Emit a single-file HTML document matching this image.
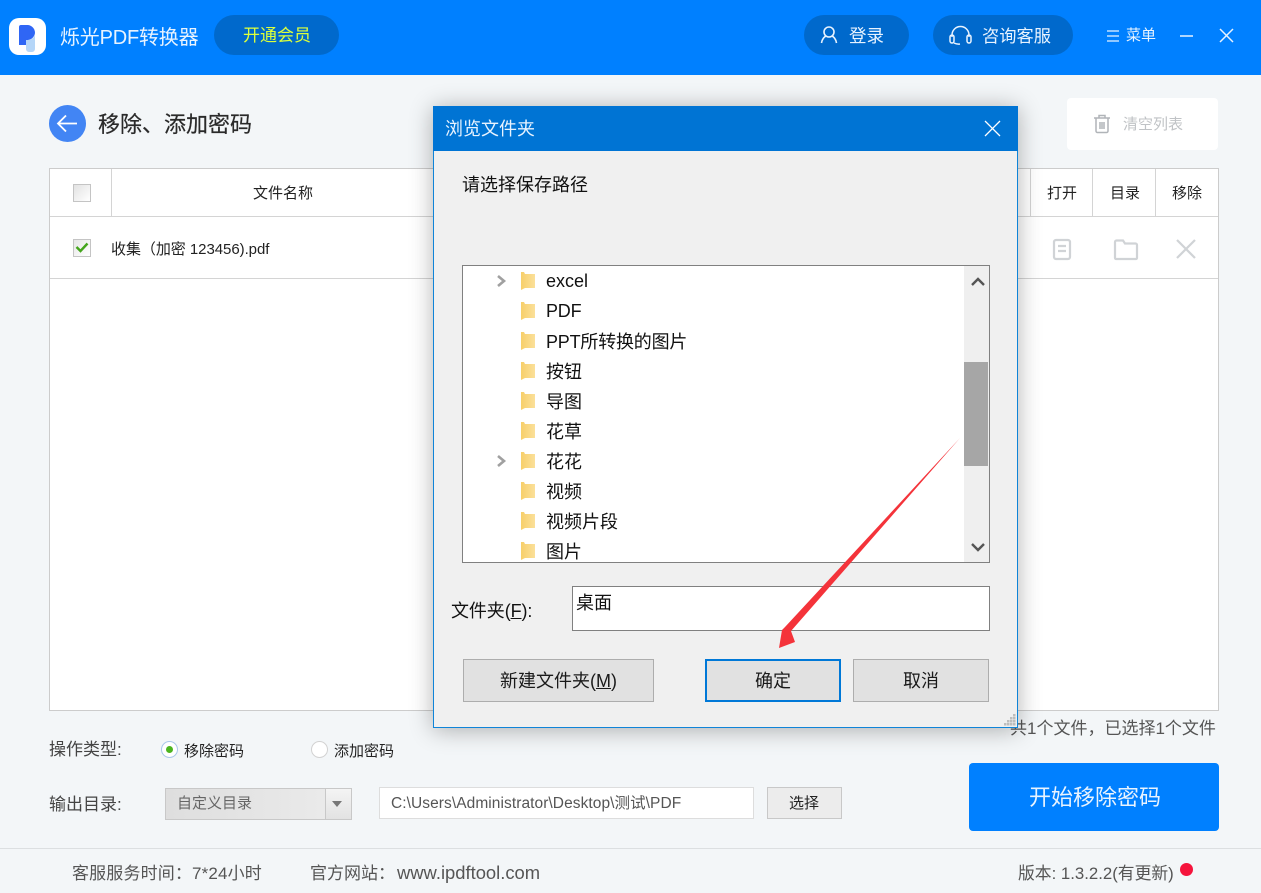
<!DOCTYPE html>
<html lang="zh"><head><meta charset="utf-8"><title>烁光PDF转换器</title>
<style>
html,body{margin:0;padding:0}
body{width:1261px;height:893px;position:relative;overflow:hidden;background:#f3f6f8;font-family:"Liberation Sans","Noto Sans CJK SC",sans-serif;color:#222}
.a{position:absolute;box-sizing:border-box}
.t{position:absolute;white-space:nowrap;line-height:24px;height:24px}
svg{position:absolute;overflow:visible}
.pill{background:#0069cc;border-radius:20px;height:40px;top:15px}
.line{position:absolute;background:#d4d4d4}
.btn{position:absolute;box-sizing:border-box;background:#e1e1e1;border:1px solid #adadad;top:659px;height:43px;text-align:center;line-height:42px;font-size:18px;color:#1a1a1a}
.row{position:absolute;left:546px;font-size:18px;line-height:24px;height:24px;white-space:nowrap;color:#111}
</style></head><body>

<!-- header -->
<div class="a" style="left:0;top:0;width:1261px;height:75px;background:#0080ff"></div>
<div class="a" style="left:9px;top:18px;width:37px;height:37px;background:#fff;border-radius:10px"></div>
<svg style="left:0;top:0" width="60" height="60"><path d="M21 25h7a8 8 0 0 1 7 8a8 8 0 0 1-7 7h-2v5h-7V27a2 2 0 0 1 2-2z" fill="#2f66f5"/><path d="M26 40h2a8 8 0 0 0 7-5v14a3 3 0 0 1-3 3h-3a3 3 0 0 1-3-3z" fill="#b5d6f8"/></svg>
<div class="t" style="left:60px;top:26px;font-size:20px;letter-spacing:-.2px;color:#e8f3ff">烁光PDF转换器</div>
<div class="a pill" style="left:214px;width:125px"></div>
<div class="t" style="left:243px;top:24px;font-size:17px;color:#dcff3c">开通会员</div>
<div class="a pill" style="left:804px;width:105px"></div>
<svg style="left:820px;top:25px" width="20" height="20" fill="none" stroke="#e8f3ff" stroke-width="1.6"><circle cx="9" cy="7" r="5"/><path d="M1.5 18c.5-4 3-6.5 4.5-6.8M16.5 18c-.5-4-3-6.5-4.500-6.800"/></svg>
<div class="t" style="left:849px;top:24px;font-size:17.5px;color:#e8f3ff">登录</div>
<div class="a pill" style="left:933px;width:140px"></div>
<svg style="left:949px;top:25px" width="24" height="20" fill="none" stroke="#e8f3ff" stroke-width="1.5"><path d="M3 12V10a8.5 8.5 0 0 1 17 0v2"/><rect x="1" y="10" width="4" height="8" rx="2"/><rect x="18" y="10" width="4" height="8" rx="2"/><path d="M5 18q3 1.5 6 1"/></svg>
<div class="t" style="left:982px;top:24px;font-size:17.25px;color:#e8f3ff">咨询客服</div>
<svg style="left:1106px;top:29px" width="14" height="14" stroke="#e8f3ff" stroke-width="1.3"><path d="M1 2h12M1 7h12M1 12h12"/></svg>
<div class="t" style="left:1126px;top:24px;font-size:15px;color:#e8f3ff">菜单</div>
<svg style="left:1179px;top:28px" width="56" height="16" stroke="#e8f3ff" stroke-width="1.5" fill="none"><path d="M1 8h13M41 1l13 13M54 1L41 14"/></svg>

<!-- title row -->
<div class="a" style="left:49px;top:105px;width:37px;height:37px;border-radius:50%;background:#4285f4"></div>
<svg style="left:49px;top:105px" width="37" height="37" fill="none" stroke="#fff" stroke-width="1.8"><path d="M9 18.5h19M17 10.5l-8 8 8 8"/></svg>
<div class="t" style="left:98px;top:113px;font-size:22px;color:#2a2a2a;-webkit-text-stroke:.2px #2a2a2a">移除、添加密码</div>
<div class="a" style="left:1067px;top:98px;width:151px;height:52px;background:#fff;border-radius:4px"></div>
<svg style="left:1093px;top:114px" width="20" height="20" fill="none" stroke="#b0b4b8" stroke-width="1.5"><path d="M1 4h16M6 4V1.500h6V4M3 4v13a1.500 1.500 0 0 0 1.500 1.500h9A1.500 1.500 0 0 0 15 17V4M7 8v7M9 8v7M11 8v7"/></svg>
<div class="t" style="left:1123px;top:113px;font-size:15px;color:#c0c3c6">清空列表</div>

<!-- table -->
<div class="a" style="left:49px;top:168px;width:1170px;height:543px;background:#fff;border:1px solid #ccc"></div>
<div class="line" style="left:50px;top:216px;width:1168px;height:1px"></div>
<div class="line" style="left:50px;top:278px;width:1168px;height:1px"></div>
<div class="line" style="left:111px;top:169px;width:1px;height:47px"></div>
<div class="line" style="left:1030px;top:169px;width:1px;height:47px"></div>
<div class="line" style="left:1092px;top:169px;width:1px;height:47px"></div>
<div class="line" style="left:1155px;top:169px;width:1px;height:47px"></div>
<div class="a" style="left:73px;top:184px;width:18px;height:18px;border:1px solid #c4c4c4;background:linear-gradient(135deg,#e2e2e2,#fff)"></div>
<div class="t" style="left:253px;top:182px;font-size:15px">文件名称</div>
<div class="t" style="left:1047px;top:182px;font-size:15px">打开</div>
<div class="t" style="left:1110px;top:182px;font-size:15px">目录</div>
<div class="t" style="left:1172px;top:182px;font-size:15px">移除</div>
<div class="a" style="left:73px;top:239px;width:18px;height:18px;border:1px solid #c4c4c4;background:linear-gradient(135deg,#e6e6e6,#fff)"></div>
<svg style="left:73px;top:239px" width="18" height="18" fill="none" stroke="#44a51c" stroke-width="2.4"><path d="M3.5 8l4 4 7-7.500"/></svg>
<div class="t" style="left:111px;top:238px;font-size:15px;letter-spacing:-.05px">收集（加密 123456).pdf</div>
<svg style="left:1052px;top:238px" width="146" height="22" fill="none" stroke="#d0d3d6" stroke-width="2.2"><rect x="2" y="2" width="16" height="19" rx="2"/><path d="M6 8h8M6 13h8"/><path d="M63 20V4a1.5 1.5 0 0 1 1.5-1.5H71l2 3h10.5A1.5 1.5 0 0 1 85 7v13a1 1 0 0 1-1 1H64a1 1 0 0 1-1-1z"/><path d="M125 2l18 18M143 2l-18 18"/></svg>

<!-- bottom options -->
<div class="t" style="left:49px;top:738px;font-size:17px;color:#444">操作类型:</div>
<div class="a" style="left:161px;top:741px;width:17px;height:17px;border-radius:50%;background:#fff;border:1px solid #aac8ea"></div>
<div class="a" style="left:166px;top:746px;width:7px;height:7px;border-radius:50%;background:#4cb51f"></div>
<div class="t" style="left:184px;top:740px;font-size:15px">移除密码</div>
<div class="a" style="left:311px;top:741px;width:17px;height:17px;border-radius:50%;background:#fff;border:1px solid #d2d2d2"></div>
<div class="t" style="left:334px;top:740px;font-size:15px">添加密码</div>
<div class="t" style="left:49px;top:793px;font-size:17px;color:#444">输出目录:</div>
<div class="a" style="left:165px;top:788px;width:187px;height:32px;border:1px solid #c8c8c8;background:linear-gradient(90deg,#dedede,#ececec)"></div>
<div class="a" style="left:325px;top:788px;width:27px;height:32px;border:1px solid #c8c8c8;background:linear-gradient(#f4f4f4,#e2e2e2)"></div>
<svg style="left:332px;top:801px" width="11" height="7"><path d="M0 0h10L5 6z" fill="#777"/></svg>
<div class="t" style="left:177px;top:792px;font-size:15px;color:#666">自定义目录</div>
<div class="a" style="left:379px;top:787px;width:375px;height:32px;background:#fff;border:1px solid #ddd"></div>
<div class="t" style="left:391px;top:792px;font-size:15.5px;color:#555;letter-spacing:.07px">C:\Users\Administrator\Desktop\测试\PDF</div>
<div class="a" style="left:767px;top:787px;width:75px;height:32px;background:#ececec;border:1px solid #c8c8c8"></div>
<div class="t" style="left:789px;top:792px;font-size:15px;color:#222">选择</div>
<div class="t" style="left:1010px;top:717px;font-size:17px;color:#555">共1个文件，已选择1个文件</div>
<div class="a" style="left:969px;top:763px;width:250px;height:68px;background:#0080ff;border-radius:4px"></div>
<div class="t" style="left:1029px;top:786px;font-size:22px;color:#e8f3ff">开始移除密码</div>

<!-- footer -->
<div class="line" style="left:0;top:848px;width:1261px;height:1px;background:#dcdfe1"></div>
<div class="t" style="left:72px;top:862px;font-size:17px;letter-spacing:.15px;color:#555">客服服务时间：7*24小时</div>
<div class="t" style="left:310px;top:862px;font-size:17px;color:#555">官方网站：</div>
<div class="t" style="left:397px;top:861px;font-size:18.4px;color:#555">www.ipdftool.com</div>
<div class="t" style="left:1018px;top:862px;font-size:16.8px;color:#555">版本: 1.3.2.2(有更新)</div>
<div class="a" style="left:1180px;top:863px;width:13px;height:13px;border-radius:50%;background:#f5143c"></div>

<!-- dialog -->
<div class="a" style="left:433px;top:106px;width:585px;height:622px;background:#f0f0f0;border:1px solid #0f84d8;box-shadow:0 2px 22px rgba(0,0,0,.3)"></div>
<div class="a" style="left:433px;top:106px;width:585px;height:45px;background:#0074d4"></div>
<div class="t" style="left:445px;top:117px;font-size:18px;color:#e8f3ff">浏览文件夹</div>
<svg style="left:985px;top:121px" width="15" height="15" stroke="#fff" stroke-width="1.3"><path d="M0 0l15 15M15 0L0 15"/></svg>
<div class="t" style="left:462px;top:173px;font-size:18px;color:#111">请选择保存路径</div>
<div class="a" style="left:462px;top:265px;width:528px;height:298px;background:#fff;border:1px solid #808080"></div>
<div class="a" style="left:964px;top:266px;width:25px;height:296px;background:#efefef"></div>
<div class="a" style="left:964px;top:362px;width:24px;height:104px;background:#a6a6a6"></div>
<svg style="left:971px;top:276px" width="14" height="278" fill="none" stroke="#555" stroke-width="2.4"><path d="M1 9l6-6 6 6M1 268l6 6 6-6"/></svg>
<svg style="left:497px;top:272px" width="40" height="290">
<defs><linearGradient id="f" x1="0" x2="1"><stop offset="0" stop-color="#f7cf6a"/><stop offset="1" stop-color="#fbe09a"/></linearGradient>
<path id="fo" d="M24 0h3l1 2h10v14H28l-4 2z" fill="url(#f)"/></defs>
<path d="M1 4l6 5-6 5" fill="none" stroke="#a0a0a0" stroke-width="2.6"/>
<path d="M1 184l6 5-6 5" fill="none" stroke="#a0a0a0" stroke-width="2.6"/>
<use href="#fo" y="0"/><use href="#fo" y="30"/><use href="#fo" y="60"/><use href="#fo" y="90"/><use href="#fo" y="120"/><use href="#fo" y="150"/><use href="#fo" y="180"/><use href="#fo" y="210"/><use href="#fo" y="240"/><use href="#fo" y="270"/>
</svg>
<div class="row" style="top:269px">excel</div>
<div class="row" style="top:299px;letter-spacing:-.2px">PDF</div>
<div class="row" style="top:330px;letter-spacing:-.2px">PPT所转换的图片</div>
<div class="row" style="top:360px">按钮</div>
<div class="row" style="top:390px">导图</div>
<div class="row" style="top:420px">花草</div>
<div class="row" style="top:450px">花花</div>
<div class="row" style="top:480px">视频</div>
<div class="row" style="top:510px">视频片段</div>
<div class="a" style="left:463px;top:540px;width:500px;height:22px;overflow:hidden"><div class="row" style="left:83px;top:0">图片</div></div>
<div class="t" style="left:451px;top:599px;font-size:18px;letter-spacing:-.1px;color:#111">文件夹(<u>F</u>):</div>
<div class="a" style="left:572px;top:586px;width:418px;height:45px;background:#fff;border:1px solid #808080"></div>
<div class="t" style="left:576px;top:591px;font-size:18px;color:#111">桌面</div>
<div class="btn" style="left:463px;width:191px">新建文件夹(<u>M</u>)</div>
<div class="btn" style="left:705px;width:136px;border:2px solid #0078d7;line-height:41px">确定</div>
<div class="btn" style="left:853px;width:136px">取消</div>
<svg style="left:1003px;top:713px" width="14" height="14" fill="#bdbdbd"><rect x="10" y="1" width="2.5" height="2.5"/><rect x="7" y="4" width="2.5" height="2.5"/><rect x="10" y="4" width="2.5" height="2.5"/><rect x="4" y="7" width="2.5" height="2.5"/><rect x="7" y="7" width="2.5" height="2.5"/><rect x="10" y="7" width="2.5" height="2.5"/><rect x="1" y="10" width="2.5" height="2.5"/><rect x="4" y="10" width="2.5" height="2.5"/><rect x="7" y="10" width="2.5" height="2.5"/><rect x="10" y="10" width="2.5" height="2.5"/></svg>

<!-- red arrow -->
<svg style="left:0;top:0" width="1261" height="893"><path d="M779 648L782 630 785 627 960 438 791 631 795 642z" fill="#f4333a"/></svg>
</body></html>
